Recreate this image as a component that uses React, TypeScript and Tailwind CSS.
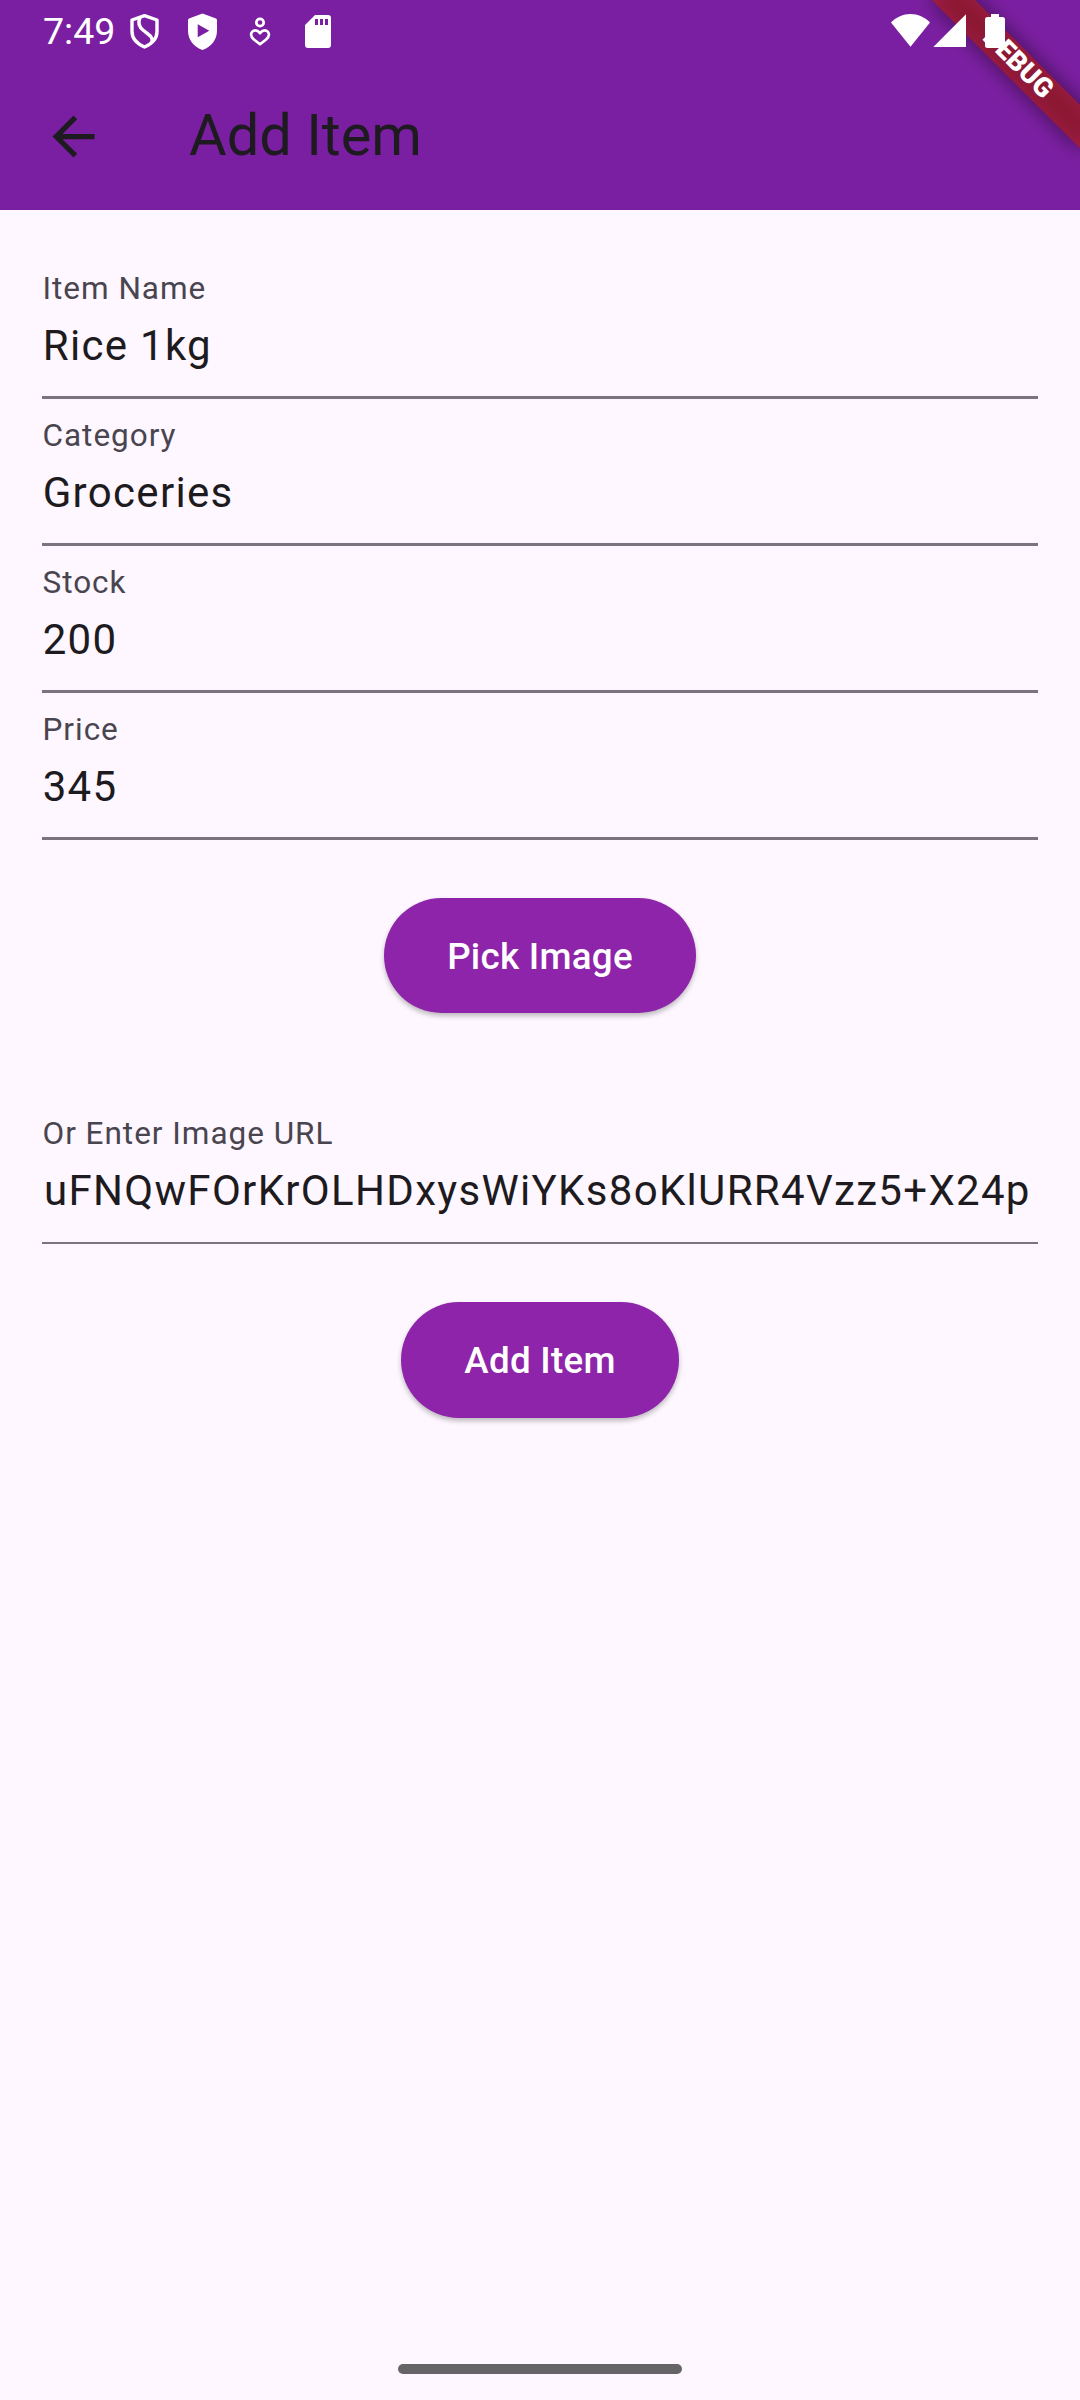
import React from "react";

function StatusBar() {
  return (
    <div className="relative z-20 flex h-[63px] items-start justify-between text-white">
      <div className="flex items-start pl-[43px]">
        <span className="w-[72px] pt-[9px] text-[37.5px] leading-[44px] whitespace-nowrap">7:49</span>
        <svg className="mt-[13px] ml-[14px] h-[37px] w-[31px]" viewBox="0 0 31 37" fill="none" stroke="currentColor" strokeWidth="3.4" strokeLinejoin="round">
          <path d="M15.5 2.7 28 7v11.500C28 25.500 22.500 31 15.500 34 8.500 31 3 25.500 3 18.500V7Z" />
          <path d="M11 4.500C8.500 10 10 14 14.500 17.500c6 4.500 9.500 6.500 8.500 11" />
        </svg>
        <svg className="mt-[13px] ml-[27px] h-[37px] w-[31px]" viewBox="0 0 31 37" fill="currentColor">
          <path fillRule="evenodd" d="M15.500.5 29 5.500Q30 6 30 7v10.500C30 27 24 34 15.500 37 7 34 1 27 1 17.500V7q0-1 1-1.500ZM10.700 11.300v13l11.600-6.500Z" />
        </svg>
        <svg className="mt-[17px] ml-[31px] h-[30px] w-[22px]" viewBox="0 0 22 30" fill="none" stroke="currentColor" strokeWidth="2.700" strokeLinejoin="round">
          <circle cx="11" cy="5.500" r="3.700" />
          <path d="M11 16.200C9.500 14.300 8 13.400 6.300 13.400a4.200 4.200 0 0 0-4.200 4.300c0 2 1 3.200 2.800 4.800L11 27.300l6.100-4.800c1.800-1.600 2.800-2.800 2.800-4.800a4.200 4.200 0 0 0-4.200-4.300c-1.700 0-3.200.9-4.700 2.800Z" />
        </svg>
        <svg className="mt-[15px] ml-[34px] h-[33px] w-[26px]" viewBox="0 0 26 33" fill="currentColor">
          <path fillRule="evenodd" d="M10 0h13a3 3 0 0 1 3 3v27a3 3 0 0 1-3 3H3a3 3 0 0 1-3-3V10ZM10 4v6h3V4Zm5 0v6h3V4Zm5 0v6h3V4Z" />
        </svg>
      </div>
      <div className="flex items-start pt-[14px] pr-[75px]">
        <svg className="h-[33px] w-[39px]" viewBox="0 0 39 33" fill="currentColor">
          <path d="M0 8.500C5.500 3 12 0 19.500 0S33.500 3 39 8.500L19.500 32.700Z" />
        </svg>
        <svg className="ml-[3px] h-[33px] w-[33px]" viewBox="0 0 33 33" fill="currentColor">
          <path d="M33 .3V33H.3Z" />
        </svg>
        <svg className="ml-[19px] h-[34px] w-[20px]" viewBox="0 0 20 34" fill="currentColor">
          <path d="M6 0h8v3h3.500Q20 3 20 5.500v26Q20 34 17.500 34h-15Q0 34 0 31.500v-26Q0 3 2.500 3H6Z" />
        </svg>
      </div>
    </div>
  );
}

function DebugBanner() {
  return (
    <div className="pointer-events-none absolute top-0 right-0 z-10 h-[210px] w-[220px] overflow-hidden">
      <div className="absolute top-0 left-full h-0 w-0 origin-top-left rotate-45">
        <div className="absolute top-[73.5px] left-[-105px] h-[31.5px] w-[210px] bg-black/50 blur-[10.4px]" />
        <div className="absolute top-[73.5px] left-[-105px] flex h-[31.5px] w-[210px] items-center justify-center bg-[#b71c1c]/63 pb-[2px] pl-[2px] text-[27px] leading-none font-black text-white">
          DEBUG
        </div>
      </div>
    </div>
  );
}

function AppBar() {
  return (
    <div className="flex h-[147px] items-center pl-[42px] text-[#1d1b20]">
      <svg className="h-[63px] w-[63px]" viewBox="0 0 24 24" fill="currentColor">
        <path d="M20 11H7.830l5.590-5.590L12 4l-8 8 8 8 1.410-1.410L7.830 13H20v-2z" />
      </svg>
      <h1 className="mb-[4px] ml-[84px] text-[57.75px] leading-[74px] whitespace-nowrap">Add Item</h1>
    </div>
  );
}

function Field({ label, value, thin = false }: { label: string; value: string; thin?: boolean }) {
  return (
    <div
      className={
        thin
          ? "h-[147px] overflow-hidden border-b-2 border-[#79747e] pt-[18px] whitespace-nowrap"
          : "h-[147px] overflow-hidden border-b-3 border-[#79747e] pt-[18px] whitespace-nowrap"
      }
    >
      <div className="pl-[0.5px] text-[31.5px] leading-[38px] tracking-[0.98px] text-[#49454f]">{label}</div>
      <div
        className={
          thin
            ? "mt-[6px] pl-[2px] text-[42px] leading-[63px] tracking-[1.3125px] text-[#1d1b20]"
            : "mt-[6px] pl-[0.7px] text-[42px] leading-[63px] tracking-[1.3125px] text-[#1d1b20]"
        }
      >
        {value}
      </div>
    </div>
  );
}

function PillButton({ children }: { children: React.ReactNode }) {
  return (
    <button className="flex h-full items-center rounded-full bg-[#8e24aa] px-[63px] pt-[2px] text-[36.75px] leading-[52px] font-medium tracking-[0.2625px] whitespace-nowrap text-white shadow-[0_3px_5px_rgba(0,0,0,0.26)]">
      {children}
    </button>
  );
}

export default function App() {
  return (
    <div className="relative flex h-[2400px] w-[1080px] flex-col overflow-hidden bg-[#fef7ff] font-['Roboto',sans-serif]">
      <header className="h-[210px] bg-[#7b1fa2]">
        <StatusBar />
        <AppBar />
      </header>
      <DebugBanner />
      <main className="flex-1 px-[42px] pt-[42px]">
        <Field label="Item Name" value="Rice 1kg" />
        <Field label="Category" value="Groceries" />
        <Field label="Stock" value="200" />
        <Field label="Price" value="345" />
        <div className="mt-[58px] flex h-[115px] justify-center">
          <PillButton>Pick Image</PillButton>
        </div>
        <div className="mt-[84px]">
          <Field label="Or Enter Image URL" value="uFNQwFOrKrOLHDxysWiYKs8oKlURR4Vzz5+X24p" thin />
        </div>
        <div className="mt-[58px] flex h-[116px] justify-center">
          <PillButton>Add Item</PillButton>
        </div>
      </main>
      <div className="flex justify-center pb-[26px]">
        <div className="h-[10px] w-[284px] rounded-full bg-[#666467]" />
      </div>
    </div>
  );
}
